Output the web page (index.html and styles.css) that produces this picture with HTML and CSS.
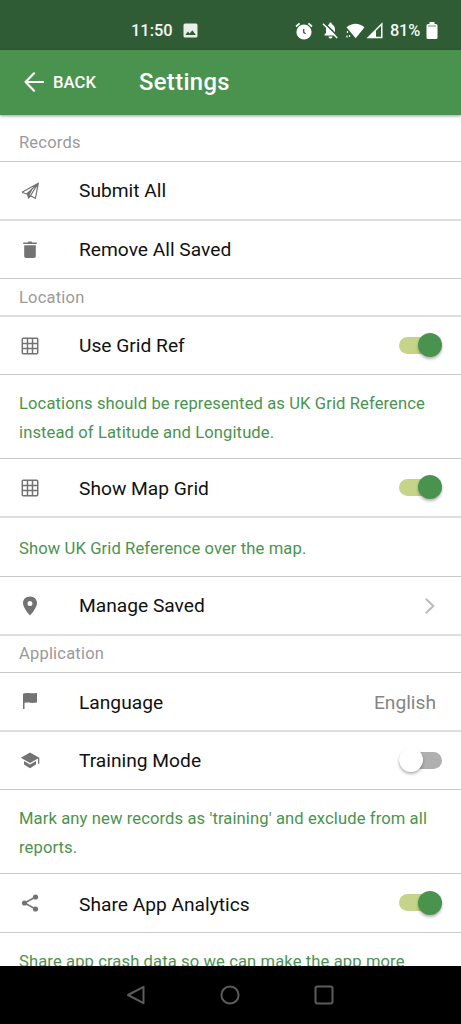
FILE: index.html
```html
<!DOCTYPE html>
<html lang="en">
<head>
<meta charset="utf-8">
<title>Settings</title>
<link rel="stylesheet" href="styles.css">
</head>
<body>
<div class="screen">
  <div class="status">
    <span class="time">11:50</span>
    <svg class="picture" width="15" height="15" viewBox="0 0 15 15"><path fill="#e9eee8" fill-rule="evenodd" d="M2 .5h11A1.500 1.500 0 0 1 14.500 2v11a1.500 1.500 0 0 1-1.500 1.500H2A1.500 1.500 0 0 1 .5 13V2A1.500 1.500 0 0 1 2 .5zM2.300 12h10.500L9.300 7.300 6.700 10.500 5 8.600z"/></svg>
    <svg class="alarm" width="18" height="18" viewBox="0 0 18 18"><circle cx="9" cy="10" r="7.600" fill="#fff"/><path d="M1 4.500 4.600 1.400M17 4.500 13.400 1.400" stroke="#fff" stroke-width="1.700" fill="none"/><path d="M8.700 7v3.500l2 1.300" stroke="#2f5c35" stroke-width="1.300" fill="none"/></svg>
    <svg class="bell" width="17" height="18" viewBox="0 0 17 18"><path fill="#fff" d="M2.500 13.500v-1l1.500-1.400V7.500C4 5 5.200 3 7.300 2.300V1.600a1.200 1.200 0 0 1 2.400 0v.7C11.800 3 13 5 13 7.500v3.600l1.500 1.400v1zM6.500 14.600h4a2 2 0 0 1-4 0z"/><path d="M2.300.8 16.500 15" stroke="#2f5c35" stroke-width="1.600"/><path d="M1 1.800 15.200 16" stroke="#fff" stroke-width="1.500"/></svg>
    <svg class="wifi" width="19" height="16" viewBox="0 0 19 16"><path fill="#fff" d="M.5 4.200C6-.5 13-.5 18.500 4.200L9.700 15.300z"/><path d="M1.500 8v2M3.500 12v2M1 12.500v2" stroke="#fff" stroke-width="1.200"/></svg>
    <svg class="signal" width="17" height="17" viewBox="0 0 17 17"><path fill="#fff" fill-rule="evenodd" d="M.5 16.300 16.500.3v16zM10 8.700v6.100h5V3.800z"/></svg>
    <span class="percent">81%</span>
    <svg class="battery" width="12" height="17" viewBox="0 0 12 17"><path fill="#fff" d="M3.500 0h5v2H10q1.500 0 1.500 1.500v12Q11.500 17 10 17H2Q.5 17 .5 15.500v-12Q.5 2 2 2h1.500z"/><path d="M2 4h8" stroke="#6e8d72"/></svg>
  </div>
  <header class="toolbar">
    <svg class="arrow" width="20" height="20" viewBox="0 0 20 20"><path d="M10 1.300 1.600 10l8.400 8.700M1.600 10H19" fill="none" stroke="#fff" stroke-width="2.200" stroke-linecap="round" stroke-linejoin="round"/></svg>
    <span class="back">BACK</span>
    <h1 class="title">Settings</h1>
  </header>
  <main class="list">
    <h2 class="divider first">Records</h2>
    <div class="row soft">
      <svg class="icon" viewBox="0 0 20 20"><path d="M2 11.300 18.300 2.200 15.400 17.500 10.600 14.800M2 11.300l4.700 1.700L18.300 2.200 10.400 14.800" fill="none" stroke="#737373" stroke-width="1.200" stroke-linejoin="round"/><path fill="#737373" d="m6.600 12.500 6-4.300-3 5.700 2 1.200-3.300 3z"/></svg>
      <span class="label">Submit All</span>
    </div>
    <div class="row r58">
      <svg class="icon" viewBox="0 0 20 20"><path fill="#737373" d="M4.200 5.300h11.600v11q0 1.800-1.800 1.800H6q-1.800 0-1.800-1.800zM3.200 2.600h4.500l.8-1.200h3l.8 1.200h4.500v1.500H3.200z"/></svg>
      <span class="label">Remove All Saved</span>
    </div>
    <h2 class="divider soft">Location</h2>
    <div class="row r58">
      <svg class="icon" viewBox="0 0 20 20"><path d="M3.300 2.300h13.400q1 0 1 1v13.400q0 1-1 1H3.300q-1 0-1-1V3.300q0-1 1-1zM7.500 2v16M12.500 2v16M2 7.500h16M2 12.500h16" fill="none" stroke="#737373" stroke-width="1.500"/></svg>
      <span class="label">Use Grid Ref</span><span class="toggle on"></span>
    </div>
    <p class="note two">Locations should be represented as UK Grid Reference<br>instead of Latitude and Longitude.</p>
    <div class="row soft low">
      <svg class="icon" viewBox="0 0 20 20"><path d="M3.300 2.300h13.400q1 0 1 1v13.400q0 1-1 1H3.300q-1 0-1-1V3.300q0-1 1-1zM7.500 2v16M12.500 2v16M2 7.500h16M2 12.500h16" fill="none" stroke="#737373" stroke-width="1.500"/></svg>
      <span class="label">Show Map Grid</span><span class="toggle on"></span>
    </div>
    <p class="note one">Show UK Grid Reference over the map.</p>
    <div class="row soft">
      <svg class="icon" viewBox="0 0 20 20"><path fill="#737373" fill-rule="evenodd" d="M10 .6c4 0 7 2.800 7 6.500 0 4.300-4.500 9.600-7 12.500-2.500-2.900-7-8.200-7-12.500C3 3.400 6 .6 10 .6zm0 4.300a2.500 2.500 0 1 0 0 5 2.500 2.500 0 0 0 0-5z"/></svg>
      <span class="label">Manage Saved</span>
      <svg class="chevron" width="12" height="18" viewBox="0 0 12 18"><path d="m1.800 1.800 7.500 7.200-7.500 7.200" fill="none" stroke="#bbb" stroke-width="2"/></svg>
    </div>
    <h2 class="divider app">Application</h2>
    <div class="row soft low">
      <svg class="icon" viewBox="0 0 20 20"><path fill="#737373" d="M3 1.700q2-1.200 6-.6 3 .5 8 0v9.500q-5 .6-8 0-2.500-.5-4.500.2v6.200H3z"/></svg>
      <span class="label">Language</span><span class="value">English</span>
    </div>
    <div class="row r58">
      <svg class="icon" viewBox="0 0 20 20"><path fill="#737373" d="M10 1.500.8 6.700 10 12l8-4.600v5.400h1.300V6.700zM4 10v3.600l6 3.600 6-3.600V10l-6 3.500z"/></svg>
      <span class="label">Training Mode</span><span class="toggle"></span>
    </div>
    <p class="note two">Mark any new records as 'training' and exclude from all<br>reports.</p>
    <div class="row low">
      <svg class="icon" viewBox="0 0 20 20"><path d="M15.500 4 4.500 10l11 6" fill="none" stroke="#737373" stroke-width="1.500"/><g fill="#737373"><circle cx="15.500" cy="4" r="2.600"/><circle cx="4.500" cy="10" r="2.600"/><circle cx="15.500" cy="16" r="2.600"/></g></svg>
      <span class="label">Share App Analytics</span><span class="toggle on"></span>
    </div>
    <p class="note cut">Share app crash data so we can make the app more</p>
  </main>
  <nav class="nav">
    <svg width="20" height="20" viewBox="0 0 20 20"><path d="M17.500 1.800v16.400L2 10z"/></svg>
    <svg width="20" height="20" viewBox="0 0 20 20"><circle cx="10" cy="10" r="8.600"/></svg>
    <svg width="20" height="20" viewBox="0 0 20 20"><rect x="1.500" y="1.500" width="17" height="17" rx="2"/></svg>
  </nav>
</div>
</body>
</html>
```
FILE: styles.css
```css
* { box-sizing: border-box; }
body { margin: 0; font-family: Roboto, "Liberation Sans", sans-serif; background: #fff; }
.screen { width: 461px; height: 1024px; display: flex; flex-direction: column; overflow: hidden; }
.status { height: 50px; flex: none; background: #2f5c35; color: #f4f7f4; display: flex; align-items: center; padding: 11px 23px 0 131px; font-size: 16.400px; font-weight: 500; }
.status svg { flex: none; }
.time { width: 52px; }
.alarm { margin-left: 97px; }
.bell { margin-left: 9px; }
.wifi { margin-left: 7px; }
.signal { margin-left: 1px; }
.percent { margin-left: 7px; width: 36px; letter-spacing: -.2px; }
.toolbar { height: 65px; flex: none; background: #4a934f; color: #fff; display: flex; align-items: center; padding: 0 0 1px 24px; box-shadow: 0 1px 3px rgba(0,0,0,.4); position: relative; z-index: 1; }
.back { margin-left: 9px; width: 86px; font-size: 16.700px; font-weight: 500; }
.title { margin: 0; font-size: 23.800px; font-weight: 500; letter-spacing: .35px; }
.list { flex: 1; min-height: 0; overflow: hidden; background: #fff; }
.divider { margin: 0; height: 38px; padding: 0 19px; display: flex; align-items: center; border-bottom: 1px solid #c9c9c9; font-size: 16.500px; font-weight: 400; color: #9a9a9a; letter-spacing: .2px; }
.divider.first { height: 47px; padding-top: 9px; }
.divider.app { height: 37px; padding-bottom: 2px; }
.row { height: 59px; padding: 0 19px 0 20px; display: flex; align-items: center; border-bottom: 1px solid #c9c9c9; }
.row.r58 { height: 58px; }
.soft { border-bottom: 2px solid #dedede; }
.icon { width: 20px; height: 20px; margin-right: 39px; flex: none; }
.label { font-size: 19.200px; color: #111; flex: 1; }
.low .label, .low .value { padding-top: 2px; }
.value { font-size: 19.200px; color: #858585; margin-right: 6px; }
.chevron { margin-right: 6px; }
.toggle { width: 43px; height: 17px; margin-bottom: 1px; border-radius: 9px; background: #b0b0b0; display: flex; align-items: center; flex: none; }
.toggle::before { content: ""; width: 24px; height: 24px; border-radius: 50%; background: #fff; box-shadow: 0 2px 3px rgba(0,0,0,.3); flex: none; }
.toggle.on { background: #c6d489; justify-content: flex-end; }
.toggle.on::before { background: #4a934f; }
.note { margin: 0; padding: 14px 19px 0; font-size: 16.600px; line-height: 29px; color: #4a934f; border-bottom: 1px solid #c9c9c9; white-space: nowrap; letter-spacing: .1px; }
.note.two { height: 84px; }
.note.one { height: 59px; padding-top: 16px; }
.note.cut { border: 0; }
.nav { height: 58px; flex: none; background: #000; display: flex; justify-content: center; align-items: center; gap: 74px; padding-right: 1px; }
.nav svg { fill: none; stroke: #5c5c5c; stroke-width: 2; stroke-linejoin: round; }
```
